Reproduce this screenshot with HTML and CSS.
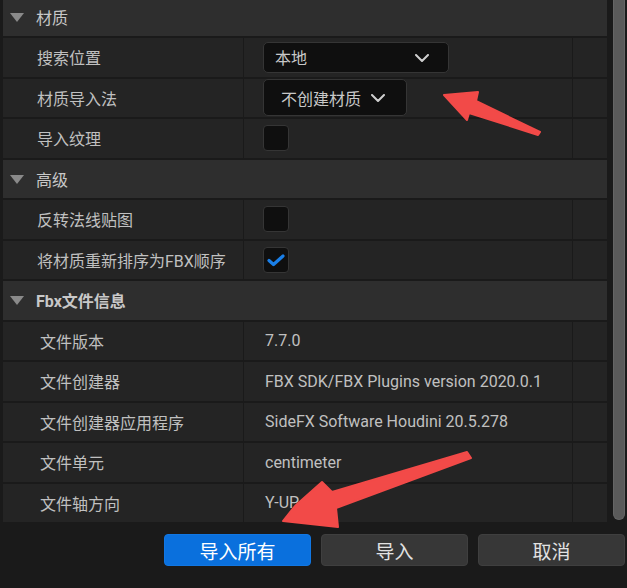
FILE: index.html
```html
<!DOCTYPE html>
<html lang="zh">
<head>
<meta charset="utf-8">
<title>FBX 导入选项</title>
<link rel="stylesheet" href="styles.css">
</head>
<body>
<div class="window">
  <div class="main">
    <div class="panel">
      <div class="section">
        <span class="tri"></span><span class="section-title">材质</span>
      </div>
      <div class="row">
        <div class="cell label">搜索位置</div>
        <div class="cell value ctl">
          <div class="dropdown dd-wide"><span>本地</span>
            <svg class="chev" width="14" height="8" viewBox="0 0 14 8"><path d="M1 1 L7 7 L13 1" fill="none" stroke="#cfcfcf" stroke-width="2" stroke-linecap="round" stroke-linejoin="round"/></svg>
          </div>
        </div>
        <div class="cell"></div>
      </div>
      <div class="row">
        <div class="cell label">材质导入法</div>
        <div class="cell value ctl">
          <div class="dropdown dd-narrow"><span>不创建材质</span>
            <svg class="chev" width="14" height="8" viewBox="0 0 14 8"><path d="M1 1 L7 7 L13 1" fill="none" stroke="#cfcfcf" stroke-width="2" stroke-linecap="round" stroke-linejoin="round"/></svg>
          </div>
        </div>
        <div class="cell"></div>
      </div>
      <div class="row">
        <div class="cell label">导入纹理</div>
        <div class="cell value ctl"><div class="checkbox"></div></div>
        <div class="cell"></div>
      </div>
      <div class="section">
        <span class="tri"></span><span class="section-title">高级</span>
      </div>
      <div class="row">
        <div class="cell label">反转法线贴图</div>
        <div class="cell value ctl"><div class="checkbox"></div></div>
        <div class="cell"></div>
      </div>
      <div class="row">
        <div class="cell label">将材质重新排序为FBX顺序</div>
        <div class="cell value ctl">
          <div class="checkbox">
            <svg width="18" height="13" viewBox="0 0 18 13"><path d="M2 6.5 L6.5 10.5 L16 2" fill="none" stroke="#1a7fe8" stroke-width="3.2" stroke-linecap="round" stroke-linejoin="round"/></svg>
          </div>
        </div>
        <div class="cell"></div>
      </div>
      <div class="section">
        <span class="tri"></span><span class="section-title bold">Fbx文件信息</span>
      </div>
      <div class="row info">
        <div class="cell label">文件版本</div>
        <div class="cell value">7.7.0</div>
        <div class="cell"></div>
      </div>
      <div class="row info">
        <div class="cell label">文件创建器</div>
        <div class="cell value">FBX SDK/FBX Plugins version 2020.0.1</div>
        <div class="cell"></div>
      </div>
      <div class="row info">
        <div class="cell label">文件创建器应用程序</div>
        <div class="cell value">SideFX Software Houdini 20.5.278</div>
        <div class="cell"></div>
      </div>
      <div class="row info">
        <div class="cell label">文件单元</div>
        <div class="cell value">centimeter</div>
        <div class="cell"></div>
      </div>
      <div class="row info">
        <div class="cell label">文件轴方向</div>
        <div class="cell value">Y-UP</div>
        <div class="cell"></div>
      </div>
    </div>
    <div class="scroll-track"><div class="scroll-thumb"></div></div>
  </div>
  <div class="buttons">
    <button class="btn primary">导入所有</button>
    <button class="btn">导入</button>
    <button class="btn">取消</button>
  </div>
  <svg class="annotations" width="627" height="588" viewBox="0 0 627 588">
    <polygon points="444,95 478,92 476,101 540,132 538,135 469,113 467,120" fill="#f24a48" stroke="#f24a48" stroke-width="2" stroke-linejoin="round"/>
    <polygon points="283,521 295,506 322,482 332,492 467,452 471,458 336,508 338,527" fill="#f24a48" stroke="#f24a48" stroke-width="2" stroke-linejoin="round"/>
  </svg>
</div>
</body>
</html>
```

FILE: styles.css
```css
* { box-sizing: border-box; }

html, body {
  margin: 0;
  padding: 0;
  background: #1a1a1a;
}

body {
  width: 627px;
  height: 588px;
  overflow: hidden;
  font-family: Roboto, "Noto Sans CJK SC", sans-serif;
  font-size: 16px;
  color: #c0c0c0;
}

.window {
  position: relative;
  width: 627px;
  height: 588px;
}

.main {
  display: flex;
  align-items: flex-start;
  height: 522px;
  overflow: hidden;
}

.panel {
  margin-left: 3px;
  margin-top: -2.5px;
  width: 604px;
  display: flex;
  flex-direction: column;
  gap: 2px;
  background: #1a1a1a;
}

.section {
  height: 38.5px;
  background: #2e2e2e;
  display: flex;
  align-items: center;
  padding-left: 7px;
  color: #c8c8c8;
}

.tri {
  width: 0;
  height: 0;
  border-left: 7.5px solid transparent;
  border-right: 7.5px solid transparent;
  border-top: 9px solid #8a8a8a;
  margin-right: 12px;
  margin-top: 1px;
}

.section-title.bold {
  font-weight: 700;
}

.row {
  height: 38.5px;
  display: grid;
  grid-template-columns: 240px 328px 1fr;
  column-gap: 1px;
  background: #1a1a1a;
}

.cell {
  background: #242424;
  display: flex;
  align-items: center;
}

.label {
  padding-left: 34px;
}

.row.info .label {
  padding-left: 37px;
}

.value {
  padding-left: 21px;
}

.value.ctl {
  padding-left: 19px;
}

.dropdown {
  display: flex;
  align-items: center;
  background: #0f0f0f;
  border: 1px solid #353535;
  border-radius: 5px;
  color: #c8c8c8;
}

.dd-wide {
  width: 186px;
  height: 31px;
  justify-content: space-between;
  padding: 0 19px 0 11px;
}

.dd-narrow {
  width: 144px;
  height: 37px;
  gap: 10px;
  padding: 0 0 0 17px;
}

.chev {
  display: block;
  margin-top: 1px;
}

.checkbox {
  width: 26px;
  height: 26px;
  background: #0f0f0f;
  border: 1px solid #353535;
  border-radius: 4px;
  display: flex;
  align-items: center;
  justify-content: center;
}

.checkbox svg {
  display: block;
  margin-top: 1px;
}

.scroll-track {
  width: 20px;
  height: 520px;
  padding-left: 6px;
  padding-right: 2px;
}

.scroll-thumb {
  width: 12px;
  height: 520px;
  background: #5a5a5a;
  border: 1px solid #656565;
  border-top: none;
  border-radius: 0 0 6px 6px;
}

.buttons {
  display: flex;
  gap: 10px;
  padding-left: 164px;
  margin-top: 12px;
}

.btn {
  width: 147px;
  height: 32px;
  border-radius: 4px;
  border: 1px solid #3f3f3f;
  background: #373737;
  color: #e2e2e2;
  font-family: Roboto, "Noto Sans CJK SC", sans-serif;
  font-size: 19px;
  padding: 0;
  display: flex;
  align-items: center;
  justify-content: center;
}

.btn.primary {
  background: #0a70dd;
  border-color: #1177e3;
  color: #ffffff;
}

.annotations {
  position: absolute;
  left: 0;
  top: 0;
  pointer-events: none;
}
```
